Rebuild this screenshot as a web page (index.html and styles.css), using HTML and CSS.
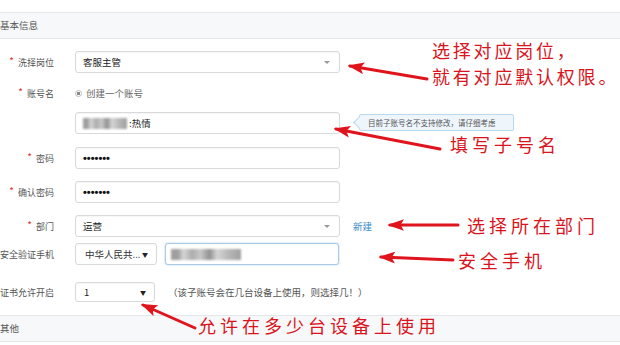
FILE: index.html
```html
<!DOCTYPE html>
<html lang="zh">
<head>
<meta charset="utf-8">
<link rel="stylesheet" href="styles.css">
</head>
<body>
<div class="page">
  <div class="section-head">基本信息</div>
  <div class="form">
    <div class="row r1">
      <div class="label"><span class="star">*</span>洗择岗位</div>
      <div class="control select wide">客服主管<span class="caret"></span></div>
    </div>
    <div class="row r2">
      <div class="label"><span class="star">*</span>账号名</div>
      <div class="radio"><span class="dot"></span>创建一个账号</div>
    </div>
    <div class="row r3">
      <div class="label"></div>
      <div class="control wide"><span class="blur b1"></span>:热情</div>
      <div class="tip">目前子账号名不支持修改，请仔细考虑</div>
    </div>
    <div class="row r4">
      <div class="label"><span class="star">*</span>密码</div>
      <div class="control wide pwd">•••••••</div>
    </div>
    <div class="row r5">
      <div class="label"><span class="star">*</span>确认密码</div>
      <div class="control wide pwd">•••••••</div>
    </div>
    <div class="row r6">
      <div class="label"><span class="star">*</span>部门</div>
      <div class="control select wide">运营<span class="caret"></span></div>
      <a class="link">新建</a>
    </div>
    <div class="row r7">
      <div class="label">安全验证手机</div>
      <div class="control country">中华人民共...<span class="tri">▼</span></div>
      <div class="control phone"><span class="blur b2"></span></div>
    </div>
    <div class="row r8">
      <div class="label">证书允许开启</div>
      <div class="control cert">1<span class="tri">▼</span></div>
      <div class="hint">（该子账号会在几台设备上使用，则选择几！）</div>
    </div>
  </div>
  <div class="section-head other">其他</div>

  <svg class="arrows" width="620" height="345" viewBox="0 0 620 345">
    <defs>
      <marker id="ah" viewBox="0 0 14 10" refX="12" refY="5" markerWidth="5.5" markerHeight="4" orient="auto" markerUnits="strokeWidth">
        <path d="M0,0 L14,5 L0,10 L3,5 Z" fill="#e0141c"/>
      </marker>
    </defs>
    <g stroke="#e0141c" stroke-width="3" stroke-linecap="round" fill="none">
      <line x1="427" y1="79" x2="350" y2="66" marker-end="url(#ah)"/>
      <line x1="440" y1="149" x2="336" y2="129" marker-end="url(#ah)"/>
      <line x1="458" y1="225" x2="390" y2="225" marker-end="url(#ah)"/>
      <line x1="453" y1="260" x2="381" y2="257" marker-end="url(#ah)"/>
      <line x1="195" y1="328" x2="143" y2="305" marker-end="url(#ah)"/>
    </g>
  </svg>
  <div class="note n1">选择对应岗位，<br>就有对应默认权限。</div>
  <div class="note n2">填写子号名</div>
  <div class="note n3">选择所在部门</div>
  <div class="note n4">安全手机</div>
  <div class="note n5">允许在多少台设备上使用</div>
</div>
</body>
</html>
```
FILE: styles.css
```css
html, body {
  margin: 0;
  padding: 0;
  background: #fff;
}
body {
  font-family: "Noto Sans CJK SC", "Liberation Sans", sans-serif;
  font-size: 10px;
  color: #444;
}
.page {
  position: relative;
  width: 620px;
  height: 345px;
  overflow: hidden;
}
.section-head {
  margin-top: 12px;
  height: 25px;
  line-height: 25px;
  background: #f6f8f9;
  border-top: 1px solid #e4e7e9;
  border-bottom: 1px solid #e4e7e9;
  color: #555;
  font-size: 9.5px;
  padding-left: 0;
}
.section-head.other {
  margin-top: 13px;
}
.form {
  display: flex;
  flex-direction: column;
}
.row {
  display: flex;
  align-items: center;
}
.r1 { margin-top: 12px; }
.r2 { margin-top: 13px; height: 14px; }
.r3 { margin-top: 12px; }
.r4 { margin-top: 13px; }
.r5 { margin-top: 12px; }
.r6 { margin-top: 12px; }
.r7 { margin-top: 6px; }
.r8 { margin-top: 17px; }
.label {
  flex: none;
  width: 54px;
  display: flex;
  justify-content: flex-end;
  align-items: center;
  white-space: nowrap;
  color: #555;
  font-size: 9px;
  margin-right: 21px;
}
.star {
  color: #e0302c;
  margin-right: 4px;
  position: relative;
  top: -2px;
  font-size: 10px;
}
.control {
  position: relative;
  box-sizing: border-box;
  height: 22px;
  border: 1px solid #d6dadd;
  border-radius: 3px;
  background: #fff;
  box-shadow: inset 0 1px 1px rgba(0,0,0,0.04);
  padding-left: 7px;
  display: flex;
  align-items: center;
  font-size: 9.5px;
  color: #222;
  flex: none;
}
.wide { width: 265px; }
.caret {
  position: absolute;
  right: 9px;
  top: 9px;
  width: 0;
  height: 0;
  border-left: 3px solid transparent;
  border-right: 3px solid transparent;
  border-top: 3px solid #999;
}
.pwd {
  font-family: "Liberation Sans", sans-serif;
  font-size: 11px;
  font-weight: bold;
  letter-spacing: 0;
  color: #111;
}
.radio {
  display: flex;
  align-items: center;
  color: #666;
  font-size: 9.5px;
}
.dot {
  width: 7px;
  height: 7px;
  border-radius: 50%;
  border: 1px solid #bbb;
  box-sizing: border-box;
  margin-right: 4px;
  background: radial-gradient(circle, #888 0 1.6px, #fff 2px);
}
.blur {
  display: inline-block;
  height: 11px;
  filter: blur(1.3px);
  background: linear-gradient(90deg, #888 0 10%, #ccc 18%, #999 30%, #bbb 42%, #777 55%, #ccc 66%, #aaa 80%, #888 100%);
  opacity: 0.8;
}
.b1 { width: 44px; margin-right: 2px; }
.b2 { width: 70px; }
.tip {
  position: absolute;
  left: 359px;
  top: 114px;
  box-sizing: border-box;
  width: 155px;
  height: 17px;
  line-height: 15px;
  padding-left: 8px;
  background: #eef6fc;
  border: 1px solid #b8d8ef;
  border-radius: 2px;
  font-size: 7.5px;
  color: #555;
  white-space: nowrap;
}
.tip::before {
  content: "";
  position: absolute;
  left: -5px;
  top: 3px;
  width: 8px;
  height: 8px;
  background: #eef6fc;
  border-left: 1px solid #b8d8ef;
  border-bottom: 1px solid #b8d8ef;
  transform: rotate(45deg);
}
.link {
  margin-left: 13px;
  color: #3a8ccb;
  font-size: 9.5px;
}
.country {
  width: 82px;
  padding-left: 9px;
  color: #333;
}
.tri {
  position: absolute;
  right: 8px;
  top: 6px;
  font-size: 6px;
  color: #222;
}
.phone {
  width: 174px;
  margin-left: 8px;
  border-color: #a9cbe8;
  box-shadow: 0 0 2px rgba(90,150,210,0.5);
  padding-left: 5px;
}
.cert {
  width: 80px;
  height: 20px;
  padding-left: 8px;
  color: #222;
}
.cert .tri { top: 5px; }
.hint {
  margin-left: 13px;
  color: #555;
  font-size: 9.5px;
  white-space: nowrap;
}
.arrows {
  position: absolute;
  left: 0;
  top: 0;
  pointer-events: none;
}
.note {
  position: absolute;
  color: #d9141c;
  font-size: 18px;
  letter-spacing: 4px;
  line-height: 26px;
  white-space: nowrap;
  font-family: "Noto Sans CJK SC", sans-serif;
}
.n1 { left: 432px; top: 37px; letter-spacing: 2.8px; }
.n2 { left: 450px; top: 131px; }
.n3 { left: 467px; top: 212px; }
.n4 { left: 458px; top: 247px; }
.n5 { left: 198px; top: 312px; }
```
